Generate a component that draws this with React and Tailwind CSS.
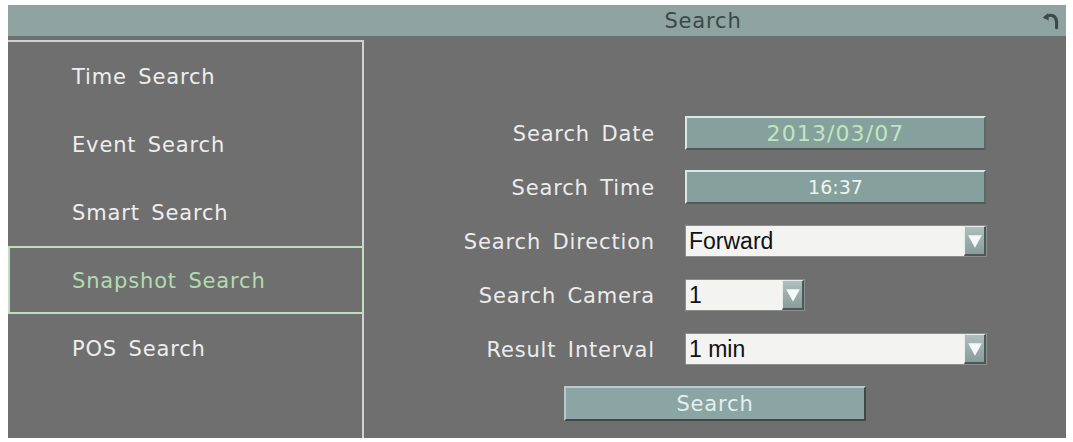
import React from 'react'

const font = { fontFamily: '"DejaVu Sans", Verdana, sans-serif' }

const menu = ['Time Search', 'Event Search', 'Smart Search', 'Snapshot Search', 'POS Search']

function ReturnIcon(){
  return (
    <svg width="20" height="20" viewBox="0 0 18 18" fill="none">
      <path d="M5 5 C9 2.5, 13.5 4, 14 9.5 L14 15" stroke="#3b4947" strokeWidth="2.8" strokeLinecap="round" fill="none" />
      <path d="M1.5 6 L6.5 1.8 L7 8.5 Z" fill="#3b4947" />
    </svg>
  )
}

function Field({ children }){
  return (
    <div className="h-[34px] w-[301px] flex items-center justify-center bg-[#86a09d] border-2 border-t-[#dbe9e4] border-l-[#dbe9e4] border-b-[#4f5c5a] border-r-[#5a6866]">
      {children}
    </div>
  )
}

function Select({ value, width }){
  return (
    <div className={`h-[32px] ${width} flex items-stretch bg-[#f3f4f2] border border-[#8a8f8d]`}>
      <div className="flex-1 flex items-center pl-[3px] text-[23px] text-[#111] font-['Liberation_Sans',Arial,sans-serif]">{value}</div>
      <div className="w-[22px] flex items-center justify-center bg-gradient-to-b from-[#aebfbc] to-[#8a9d9a] border-l border-t border-[#e6eeec] border-r-2 border-b-2 border-r-[#4d5957] border-b-[#4d5957]">
        <svg width="16" height="16" viewBox="0 0 14 14"><path d="M1 2 L13 2 L7 13 Z" fill="#f4f8f7" /></svg>
      </div>
    </div>
  )
}

export default function App(){
  const rows = [
    ['Search Date', <Field><span className="text-[22px] text-[#bde8bd] tracking-wider">2013/03/07</span></Field>],
    ['Search Time', <Field><span className="text-[19px] text-[#eef4f0]">16:37</span></Field>],
    ['Search Direction', <Select value="Forward" width="w-[302px]" />],
    ['Search Camera', <Select value="1" width="w-[120px]" />],
    ['Result Interval', <Select value="1 min" width="w-[302px]" />],
  ]
  const txt = 'text-[21px] tracking-[0.04em] [word-spacing:4px]'
  return (
    <div className="w-[1073px] h-[442px] bg-white pt-[5px] pl-[8px] pr-[7px] pb-[4px]" style={font}>
      <div className="h-full flex flex-col bg-[#6f6f6f]">
        <div className="h-[32px] flex items-center bg-[#8fa4a1] border-b border-[#67726f]">
          <div className={`flex-1 pl-[362px] pt-[2px] text-center text-[#3b4947] ${txt}`}>Search</div>
          <div className="w-[30px] flex justify-center"><ReturnIcon /></div>
        </div>
        <div className="flex-1 flex">
          <div className="w-[356px] mt-[3px] border-t-2 border-r-2 border-[#cfd2d0] flex flex-col">
            {menu.map(m => (
              m === 'Snapshot Search' ? (
                <div key={m} className={`h-[68px] flex items-center pl-[62px] pt-[4px] border-2 border-[#c2dcc2] -mr-[2px] text-[#b3dbb0] ${txt}`}>{m}</div>
              ) : (
                <div key={m} className={`h-[68px] flex items-center pl-[64px] pt-[4px] text-[#eeeeee] ${txt}`}>{m}</div>
              )
            ))}
          </div>
          <div className="flex-1 pt-[69px] flex flex-col">
            {rows.map(([label, ctl]) => (
              <div key={label} className="h-[54px] flex items-center">
                <div className={`w-[291px] pt-[4px] text-right text-[#ececec] ${txt}`}>{label}</div>
                <div className="ml-[30px]">{ctl}</div>
              </div>
            ))}
            <div className="mt-[10px] flex justify-center">
              <div className={`h-[35px] w-[302px] flex items-center justify-center pt-[2px] bg-[#8aa5a3] border-2 border-t-[#b9cbc8] border-l-[#b9cbc8] border-b-[#3f4a49] border-r-[#3f4a49] text-[#e3efec] ${txt}`}>Search</div>
            </div>
          </div>
        </div>
      </div>
    </div>
  )
}
